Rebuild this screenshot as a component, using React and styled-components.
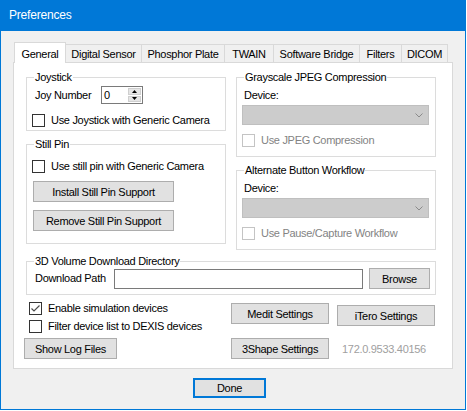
import React from 'react';
import styled, { createGlobalStyle } from 'styled-components';

const Global = createGlobalStyle`
  html, body { margin: 0; padding: 0; background: #ffffff; }
  body {
    font-family: "Liberation Sans", Arial, sans-serif;
    font-size: 11px;
    letter-spacing: -0.3px;
    color: #000;
  }
  * { box-sizing: border-box; }
`;

const Window = styled.div`
  width: 466px;
  height: 410px;
  display: flex;
  flex-direction: column;
  border: 1px solid #0078d7;
  border-top: none;
  background: #f0f0f0;
`;

const TitleBar = styled.div`
  height: 31px;
  flex: none;
  background: #0078d7;
  color: #fff;
  font-size: 12px;
  letter-spacing: -0.2px;
  display: flex;
  align-items: center;
  padding-left: 8px;
  padding-bottom: 1px;
`;

const Body = styled.div`
  flex: 1;
  padding: 11px 12px 0 12px;
  display: flex;
  flex-direction: column;
`;

const TabStrip = styled.div`
  display: flex;
  align-items: flex-end;
  height: 20px;
  padding-left: 1px;
`;

const Tab = styled.div`
  position: relative;
  z-index: ${(p) => (p.$active ? 2 : 1)};
  width: ${(p) => p.$w}px;
  height: ${(p) => (p.$active ? 21 : 18)}px;
  margin-bottom: ${(p) => (p.$active ? -1 : 0)}px;
  margin-left: ${(p) => (p.$first ? 0 : -1)}px;
  border: 1px solid #d9d9d9;
  border-bottom: none;
  background: ${(p) => (p.$active ? '#ffffff' : '#f0f0f0')};
  display: flex;
  align-items: center;
  justify-content: center;
  padding-top: 1px;
  white-space: nowrap;
`;

const Panel = styled.div`
  width: 440px;
  height: 307px;
  border: 1px solid #d9d9d9;
  background: #fff;
  padding: 8px 0 0 12px;
  display: flex;
  flex-direction: column;
`;

const TopRow = styled.div`
  display: flex;
  gap: 10px;
  height: 179px;
`;

const Column = styled.div`
  display: flex;
  flex-direction: column;
  gap: 7px;
`;

const Group = styled.fieldset`
  margin: ${(p) => p.$mt || 0}px 0 0 0;
  padding: 0;
  width: ${(p) => p.$w}px;
  height: ${(p) => p.$h}px;
  border: 1px solid #dcdcdc;
  min-inline-size: 0;
`;

const Legend = styled.legend`
  margin-left: 7px;
  padding: 0 1px;
  line-height: 13px;
  font-size: 11px;
`;

const GroupBody = styled.div`
  padding-left: 5px;
  display: flex;
  flex-direction: column;
`;

const Row = styled.div`
  display: flex;
  align-items: center;
  margin-top: ${(p) => p.$mt || 0}px;
  margin-left: ${(p) => p.$ml || 0}px;
  height: ${(p) => p.$h || 'auto'};
`;

const Label = styled.div`
  line-height: 13px;
  white-space: nowrap;
  margin-top: ${(p) => p.$mt || 0}px;
  margin-left: ${(p) => p.$ml || 0}px;
  width: ${(p) => (p.$w ? `${p.$w}px` : 'auto')};
  flex: none;
  color: ${(p) => (p.$disabled ? '#838383' : '#000')};
`;

const Button = styled.div`
  width: ${(p) => p.$w}px;
  height: ${(p) => p.$h || 21}px;
  margin-top: ${(p) => p.$mt || 0}px;
  margin-left: ${(p) => p.$ml || 0}px;
  flex: none;
  background: #e1e1e1;
  border: ${(p) => (p.$default ? '2px solid #0078d7' : '1px solid #adadad')};
  display: flex;
  align-items: center;
  justify-content: center;
  white-space: nowrap;
`;

const NumericBox = styled.div`
  width: 42px;
  height: 18px;
  border: 1px solid #7a7a7a;
  background: #fff;
  display: flex;
`;

const NumericValue = styled.div`
  flex: 1;
  padding-left: 2px;
  line-height: 16px;
`;

const SpinCol = styled.div`
  width: 14px;
  padding: 1px 1px 1px 0;
  display: flex;
  flex-direction: column;
  gap: 1px;
`;

const SpinBtn = styled.div`
  flex: 1;
  background: #e5e5e5;
  border: 1px solid #cfcfcf;
  display: flex;
  align-items: center;
  justify-content: center;
`;

const Combo = styled.div`
  width: 187px;
  height: 20px;
  margin-top: 3px;
  background: #cccccc;
  border: 1px solid #bfbfbf;
  display: flex;
  align-items: center;
  justify-content: flex-end;
  padding-right: 5px;
`;

const TextBox = styled.div`
  width: 249px;
  height: 20px;
  border: 1px solid #7a7a7a;
  background: #fff;
  flex: none;
`;

const CheckWrap = styled.div`
  display: flex;
  align-items: center;
  height: 13px;
  margin-top: ${(p) => p.$mt || 0}px;
  margin-left: ${(p) => p.$ml || 0}px;
`;

const Box = styled.div`
  width: 13px;
  height: 13px;
  flex: none;
  border: 1px solid ${(p) => (p.$disabled ? '#c4c4c4' : '#333333')};
  background: #fff;
  margin-right: 6px;
  display: flex;
  align-items: center;
  justify-content: center;
`;

const Bottom = styled.div`
  display: flex;
  margin-left: -2px;
`;

const BottomLeft = styled.div`
  width: 207px;
  display: flex;
  flex-direction: column;
`;

const BottomRight = styled.div`
  display: flex;
  flex-direction: column;
`;

const Version = styled.div`
  margin-left: 13px;
  color: #a0a0a0;
  white-space: nowrap;
`;

const Footer = styled.div`
  display: flex;
  margin-top: 9px;
`;

function CheckBox({ label, checked, disabled, mt, ml }) {
  return (
    <CheckWrap $mt={mt} $ml={ml}>
      <Box $disabled={disabled}>
        {checked && (
          <svg width="11" height="11" viewBox="0 0 11 11">
            <path d="M1.5 5.5 L4 8 L9.5 2.5" fill="none" stroke="#4d4d4d" strokeWidth="1.2" />
          </svg>
        )}
      </Box>
      <Label $disabled={disabled}>{label}</Label>
    </CheckWrap>
  );
}

function Chevron() {
  return (
    <svg width="8" height="5" viewBox="0 0 8 5">
      <path d="M0.5 0.5 L4 4 L7.5 0.5" fill="none" stroke="#8a8a8a" strokeWidth="1" />
    </svg>
  );
}

const tabs = [
  { name: 'General', w: 52, active: true },
  { name: 'Digital Sensor', w: 77 },
  { name: 'Phosphor Plate', w: 84 },
  { name: 'TWAIN', w: 50 },
  { name: 'Software Bridge', w: 87 },
  { name: 'Filters', w: 43 },
  { name: 'DICOM', w: 47 },
];

export default function App() {
  return (
    <>
      <Global />
      <Window>
        <TitleBar>Preferences</TitleBar>
        <Body>
          <TabStrip>
            {tabs.map((t, i) => (
              <Tab key={t.name} $w={t.w} $active={t.active} $first={i === 0}>
                {t.name}
              </Tab>
            ))}
          </TabStrip>
          <Panel>
            <TopRow>
              <Column>
                <Group $w={200} $h={60}>
                  <Legend>Joystick</Legend>
                  <GroupBody>
                    <Row $mt={2} $h="18px">
                      <Label $ml={3} $w={66}>Joy Number</Label>
                      <NumericBox>
                        <NumericValue>0</NumericValue>
                        <SpinCol>
                          <SpinBtn>
                            <svg width="5" height="3" viewBox="0 0 5 3">
                              <path d="M0 3 L2.5 0 L5 3 Z" fill="#000" />
                            </svg>
                          </SpinBtn>
                          <SpinBtn>
                            <svg width="5" height="3" viewBox="0 0 5 3">
                              <path d="M0 0 L2.5 3 L5 0 Z" fill="#000" />
                            </svg>
                          </SpinBtn>
                        </SpinCol>
                      </NumericBox>
                    </Row>
                    <CheckBox mt={10} label="Use Joystick with Generic Camera" />
                  </GroupBody>
                </Group>
                <Group $w={200} $h={106}>
                  <Legend>Still Pin</Legend>
                  <GroupBody>
                    <CheckBox mt={9} label="Use still pin with Generic Camera" />
                    <Button $w={141} $mt={8} $ml={1}>Install Still Pin Support</Button>
                    <Button $w={141} $mt={8} $ml={1}>Remove Still Pin Support</Button>
                  </GroupBody>
                </Group>
              </Column>
              <Column>
                <Group $w={200} $h={86}>
                  <Legend>Grayscale JPEG Compression</Legend>
                  <GroupBody>
                    <Label $mt={5} $ml={2}>Device:</Label>
                    <Combo><Chevron /></Combo>
                    <CheckBox mt={9} disabled label="Use JPEG Compression" />
                  </GroupBody>
                </Group>
                <Group $w={200} $h={86}>
                  <Legend>Alternate Button Workflow</Legend>
                  <GroupBody>
                    <Label $mt={5} $ml={2}>Device:</Label>
                    <Combo><Chevron /></Combo>
                    <CheckBox mt={9} disabled label="Use Pause/Capture Workflow" />
                  </GroupBody>
                </Group>
              </Column>
            </TopRow>
            <Group $w={410} $h={40} $mt={5}>
              <Legend>3D Volume Download Directory</Legend>
              <GroupBody>
                <Row $h="21px">
                  <Label $ml={3} $w={79}>Download Path</Label>
                  <TextBox />
                  <Button $w={61} $ml={6}>Browse</Button>
                </Row>
              </GroupBody>
            </Group>
            <Bottom>
              <BottomLeft>
                <CheckBox mt={7} ml={5} checked label="Enable simulation devices" />
                <CheckBox mt={5} ml={5} label="Filter device list to DEXIS devices" />
                <Button $w={93} $mt={5}>Show Log Files</Button>
              </BottomLeft>
              <BottomRight>
                <Row $mt={8} style={{ alignItems: 'flex-start' }} $h="23px">
                  <Button $w={98}>Medit Settings</Button>
                  <Button $w={98} $ml={8} $mt={2}>iTero Settings</Button>
                </Row>
                <Row $mt={12}>
                  <Button $w={98}>3Shape Settings</Button>
                  <Version>172.0.9533.40156</Version>
                </Row>
              </BottomRight>
            </Bottom>
          </Panel>
          <Footer>
            <Button $w={73} $h={20} $ml={180} $default>Done</Button>
          </Footer>
        </Body>
      </Window>
    </>
  );
}
